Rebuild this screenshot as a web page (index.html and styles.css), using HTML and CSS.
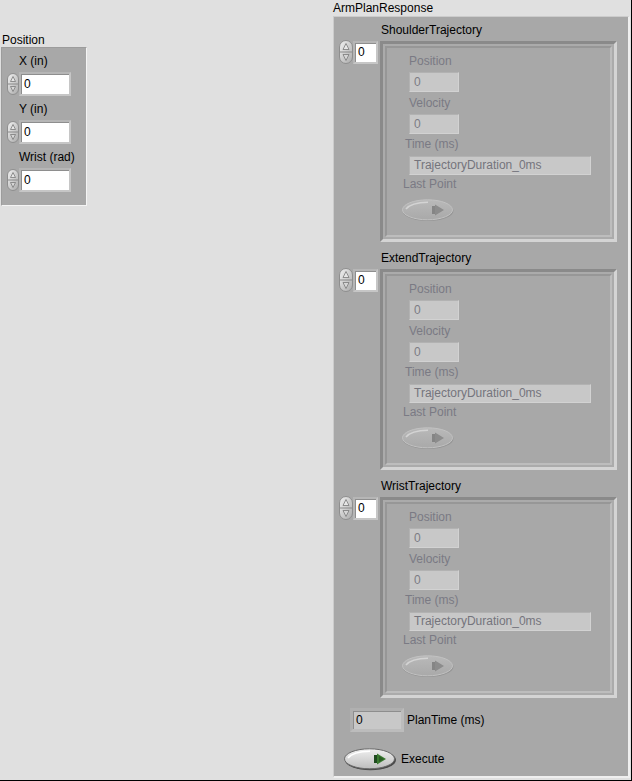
FILE: index.html
```html
<!DOCTYPE html>
<html>
<head>
<meta charset="utf-8">
<link rel="stylesheet" href="styles.css">
</head>
<body>
<svg class="defs" width="0" height="0">
  <defs>
    <linearGradient id="spinG" x1="0" y1="0" x2="1" y2="1">
      <stop offset="0" stop-color="#f2f2f2"/>
      <stop offset="1" stop-color="#a9a9a9"/>
    </linearGradient>
    <linearGradient id="btnG" x1="0" y1="0" x2="0" y2="1">
      <stop offset="0" stop-color="#f0f0f0"/>
      <stop offset="1" stop-color="#bdbdbd"/>
    </linearGradient>
    <linearGradient id="btnD" x1="0" y1="0" x2="0" y2="1">
      <stop offset="0" stop-color="#b9b9b9"/>
      <stop offset="1" stop-color="#a9a9a9"/>
    </linearGradient>
  </defs>
</svg>
<div class="page">
  <div class="left">
    <div class="cl-label">Position</div>
    <div class="cluster pos">
      <div class="field">
        <div class="flabel">X (in)</div>
        <div class="num">
          <svg class="spin-s" width="12" height="22" viewBox="0 0 12 22"><rect x="0.5" y="0.5" width="11" height="21" rx="5.5" fill="url(#spinG)" stroke="#8e8e8e"/><line x1="1" y1="11" x2="11" y2="11" stroke="#8a8a8a"/><path d="M6 3.5 L8.5 8.5 H3.5 Z" fill="#e6e6e6" stroke="#7a7a7a" stroke-width="0.8"/><path d="M6 18.5 L8.5 13.5 H3.5 Z" fill="#d6d6d6" stroke="#7a7a7a" stroke-width="0.8"/></svg>
          <div class="numbox">0</div>
        </div>
      </div>
      <div class="field">
        <div class="flabel">Y (in)</div>
        <div class="num">
          <svg class="spin-s" width="12" height="22" viewBox="0 0 12 22"><rect x="0.5" y="0.5" width="11" height="21" rx="5.5" fill="url(#spinG)" stroke="#8e8e8e"/><line x1="1" y1="11" x2="11" y2="11" stroke="#8a8a8a"/><path d="M6 3.5 L8.5 8.5 H3.5 Z" fill="#e6e6e6" stroke="#7a7a7a" stroke-width="0.8"/><path d="M6 18.5 L8.5 13.5 H3.5 Z" fill="#d6d6d6" stroke="#7a7a7a" stroke-width="0.8"/></svg>
          <div class="numbox">0</div>
        </div>
      </div>
      <div class="field">
        <div class="flabel">Wrist (rad)</div>
        <div class="num">
          <svg class="spin-s" width="12" height="22" viewBox="0 0 12 22"><rect x="0.5" y="0.5" width="11" height="21" rx="5.5" fill="url(#spinG)" stroke="#8e8e8e"/><line x1="1" y1="11" x2="11" y2="11" stroke="#8a8a8a"/><path d="M6 3.5 L8.5 8.5 H3.5 Z" fill="#e6e6e6" stroke="#7a7a7a" stroke-width="0.8"/><path d="M6 18.5 L8.5 13.5 H3.5 Z" fill="#d6d6d6" stroke="#7a7a7a" stroke-width="0.8"/></svg>
          <div class="numbox">0</div>
        </div>
      </div>
    </div>
  </div>

  <div class="right">
    <div class="cl-label">ArmPlanResponse</div>
    <div class="cluster resp">

      <div class="traj">
        <div class="traj-label">ShoulderTrajectory</div>
        <div class="traj-row">
          <div class="idx">
            <svg class="spin" width="14" height="24" viewBox="0 0 14 24"><rect x="0.5" y="0.5" width="13" height="23" rx="6.5" fill="url(#spinG)" stroke="#8e8e8e"/><line x1="1" y1="12" x2="13" y2="12" stroke="#8a8a8a"/><path d="M7 3.5 L10 9.5 H4 Z" fill="#e6e6e6" stroke="#7a7a7a" stroke-width="0.8"/><path d="M7 20.5 L10 14.5 H4 Z" fill="#d6d6d6" stroke="#7a7a7a" stroke-width="0.8"/></svg>
            <div class="idxbox">0</div>
          </div>
          <div class="arr-frame"><div class="arr-inner">
            <div class="dlabel l-pos">Position</div>
            <div class="dind">0</div>
            <div class="dlabel l-vel">Velocity</div>
            <div class="dind">0</div>
            <div class="dlabel l-time">Time (ms)</div>
            <div class="dstr">TrajectoryDuration_0ms</div>
            <div class="dlabel l-last">Last Point</div>
            <svg class="led" width="54" height="24" viewBox="0 0 54 24"><ellipse cx="27" cy="12.8" rx="25.5" ry="10.2" fill="#959595"/><ellipse cx="26.5" cy="11.8" rx="25" ry="10" fill="url(#btnD)" stroke="#c2c2c2"/><path d="M5 11 Q10 4.5 27 4.2" stroke="#d4d4d4" fill="none" stroke-width="1.5"/><rect x="31" y="8" width="5" height="8" fill="#858585"/><path d="M34 6.5 L43 12 L34 17.5 Z" fill="#8c8c8c"/></svg>
          </div></div>
        </div>
      </div>

      <div class="traj">
        <div class="traj-label">ExtendTrajectory</div>
        <div class="traj-row">
          <div class="idx">
            <svg class="spin" width="14" height="24" viewBox="0 0 14 24"><rect x="0.5" y="0.5" width="13" height="23" rx="6.5" fill="url(#spinG)" stroke="#8e8e8e"/><line x1="1" y1="12" x2="13" y2="12" stroke="#8a8a8a"/><path d="M7 3.5 L10 9.5 H4 Z" fill="#e6e6e6" stroke="#7a7a7a" stroke-width="0.8"/><path d="M7 20.5 L10 14.5 H4 Z" fill="#d6d6d6" stroke="#7a7a7a" stroke-width="0.8"/></svg>
            <div class="idxbox">0</div>
          </div>
          <div class="arr-frame"><div class="arr-inner">
            <div class="dlabel l-pos">Position</div>
            <div class="dind">0</div>
            <div class="dlabel l-vel">Velocity</div>
            <div class="dind">0</div>
            <div class="dlabel l-time">Time (ms)</div>
            <div class="dstr">TrajectoryDuration_0ms</div>
            <div class="dlabel l-last">Last Point</div>
            <svg class="led" width="54" height="24" viewBox="0 0 54 24"><ellipse cx="27" cy="12.8" rx="25.5" ry="10.2" fill="#959595"/><ellipse cx="26.5" cy="11.8" rx="25" ry="10" fill="url(#btnD)" stroke="#c2c2c2"/><path d="M5 11 Q10 4.5 27 4.2" stroke="#d4d4d4" fill="none" stroke-width="1.5"/><rect x="31" y="8" width="5" height="8" fill="#858585"/><path d="M34 6.5 L43 12 L34 17.5 Z" fill="#8c8c8c"/></svg>
          </div></div>
        </div>
      </div>

      <div class="traj">
        <div class="traj-label">WristTrajectory</div>
        <div class="traj-row">
          <div class="idx">
            <svg class="spin" width="14" height="24" viewBox="0 0 14 24"><rect x="0.5" y="0.5" width="13" height="23" rx="6.5" fill="url(#spinG)" stroke="#8e8e8e"/><line x1="1" y1="12" x2="13" y2="12" stroke="#8a8a8a"/><path d="M7 3.5 L10 9.5 H4 Z" fill="#e6e6e6" stroke="#7a7a7a" stroke-width="0.8"/><path d="M7 20.5 L10 14.5 H4 Z" fill="#d6d6d6" stroke="#7a7a7a" stroke-width="0.8"/></svg>
            <div class="idxbox">0</div>
          </div>
          <div class="arr-frame"><div class="arr-inner">
            <div class="dlabel l-pos">Position</div>
            <div class="dind">0</div>
            <div class="dlabel l-vel">Velocity</div>
            <div class="dind">0</div>
            <div class="dlabel l-time">Time (ms)</div>
            <div class="dstr">TrajectoryDuration_0ms</div>
            <div class="dlabel l-last">Last Point</div>
            <svg class="led" width="54" height="24" viewBox="0 0 54 24"><ellipse cx="27" cy="12.8" rx="25.5" ry="10.2" fill="#959595"/><ellipse cx="26.5" cy="11.8" rx="25" ry="10" fill="url(#btnD)" stroke="#c2c2c2"/><path d="M5 11 Q10 4.5 27 4.2" stroke="#d4d4d4" fill="none" stroke-width="1.5"/><rect x="31" y="8" width="5" height="8" fill="#858585"/><path d="M34 6.5 L43 12 L34 17.5 Z" fill="#8c8c8c"/></svg>
          </div></div>
        </div>
      </div>

      <div class="plantime">
        <div class="ptbox">0</div>
        <span class="plabel">PlanTime (ms)</span>
      </div>
      <div class="exec">
        <svg class="btn" width="54" height="24" viewBox="0 0 54 24"><ellipse cx="27.5" cy="13" rx="25.5" ry="10.3" fill="#4a4a4a"/><ellipse cx="26.5" cy="11.8" rx="25" ry="10" fill="url(#btnG)" stroke="#6a6a6a"/><path d="M5 11 Q10 4.5 27 4.2" stroke="#ffffff" fill="none" stroke-width="1.5"/><rect x="31" y="8" width="5" height="8" fill="#1f4a1f"/><path d="M34 6.5 L43 12 L34 17.5 Z" fill="#3a7a30"/><path d="M36 9 L41 12 L36 15 Z" fill="#2a5e24"/></svg>
        <span class="plabel">Execute</span>
      </div>

    </div>
  </div>
</div>
</body>
</html>
```

FILE: styles.css
```css
* { box-sizing: border-box; }
html, body { margin: 0; padding: 0; }
body {
  background: #ffffff;
  font-family: "Liberation Sans", Arial, sans-serif;
  font-size: 12px;
  color: #000;
}
.defs { display: block; width: 0; height: 0; overflow: hidden; }
.page {
  width: 632px;
  height: 781px;
  background: #e0e0e0;
  border-right: 1px solid #000;
  border-bottom: 1px solid #000;
  display: flex;
}
.left { width: 333px; flex: none; }
.right { width: 298px; flex: none; }
.cl-label { line-height: 14px; height: 14px; white-space: nowrap; }
.left .cl-label { margin-top: 33px; padding-left: 2px; }
.right .cl-label { margin-top: 1px; height: 15px; }

.cluster { background: #a8a8a8; }
.pos {
  margin-left: 1px;
  width: 86px;
  height: 159px;
  border-top: 1px solid #9c9c9c;
  border-left: 1px solid #9c9c9c;
  border-right: 1px solid #f4f4f4;
  border-bottom: 1px solid #f4f4f4;
  padding-top: 6px;
}
.field + .field { margin-top: 6px; }
.flabel { margin-left: 17px; line-height: 14px; height: 14px; white-space: nowrap; }
.num { margin-top: 4px; display: flex; align-items: center; margin-left: 5px; height: 24px; }
.spin-s { display: block; flex: none; }
.numbox {
  width: 52px;
  height: 24px;
  background: #fff;
  border: 2px solid #c6c6c6;
  border-top-color: #b6b6b6;
  border-left-color: #b6b6b6;
  box-shadow: inset 1px 1px 0 #8e8e8e;
  padding-left: 3px;
  line-height: 20px;
}

.resp {
  width: 297px;
  height: 762px;
  border-top: 1px solid #cccccc;
  border-left: 1px solid #cccccc;
  border-right: 2px solid #efefef;
  border-bottom: 2px solid #efefef;
  padding-top: 6px;
}
.traj + .traj { margin-top: 9px; }
.traj-label { margin-left: 47px; line-height: 14px; height: 14px; }
.traj-row { margin-top: 4px; display: flex; align-items: flex-start; }
.idx { display: flex; align-items: center; margin-left: 5px; margin-top: -1px; width: 39px; flex: none; }
.spin { display: block; flex: none; }
.idxbox {
  width: 25px;
  height: 23px;
  background: #fff;
  border: 2px solid #c6c6c6;
  border-top-color: #b6b6b6;
  border-left-color: #b6b6b6;
  box-shadow: inset 1px 1px 0 #8e8e8e;
  padding-left: 3px;
  line-height: 19px;
}
.arr-frame {
  margin-left: 2px;
  width: 237px;
  height: 201px;
  border: 3px solid;
  border-color: #8a8a8a #d4d4d4 #d4d4d4 #8a8a8a;
  padding: 2px;
  background: #ababab;
}
.arr-inner {
  height: 100%;
  border: 2px solid;
  border-color: #979797 #bdbdbd #bdbdbd #979797;
  background: #a8a8a8;
  padding-top: 6px;
  display: flex;
  flex-direction: column;
  align-items: flex-start;
}
.dlabel { color: #7a7a84; line-height: 14px; height: 14px; white-space: nowrap; }
.l-pos { margin-left: 22px; }
.l-vel { margin-left: 22px; margin-top: 4px; }
.l-time { margin-left: 18px; margin-top: 3px; }
.l-last { margin-left: 16px; margin-top: 2px; }
.dind {
  margin-left: 22px;
  margin-top: 4px;
  width: 50px;
  height: 20px;
  background: #c8c8c8;
  border: 1px solid;
  border-color: #b2b2b2 #d2d2d2 #d2d2d2 #b2b2b2;
  padding-left: 4px;
  line-height: 18px;
  color: #7c7c84;
}
.dstr {
  margin-left: 22px;
  margin-top: 5px;
  width: 182px;
  height: 19px;
  background: #c8c8c8;
  border: 1px solid;
  border-color: #b2b2b2 #d2d2d2 #d2d2d2 #b2b2b2;
  padding-left: 4px;
  line-height: 17px;
  color: #74747c;
  white-space: nowrap;
}
.led { display: block; margin-left: 14px; margin-top: 7px; }

.plantime { margin-top: 10px; margin-left: 16px; display: flex; align-items: center; }
.ptbox {
  width: 54px;
  height: 24px;
  background: #c8c8c8;
  border: 3px solid #bcbcbc;
  border-top-color: #b0b0b0;
  border-left-color: #b0b0b0;
  box-shadow: inset 1px 1px 0 #8e8e8e;
  padding-left: 3px;
  line-height: 18px;
  color: #000;
}
.plabel { margin-left: 3px; line-height: 14px; }
.exec { margin-top: 15px; margin-left: 9px; display: flex; align-items: center; }
.btn { display: block; }
.exec .plabel { margin-left: 4px; }
```
